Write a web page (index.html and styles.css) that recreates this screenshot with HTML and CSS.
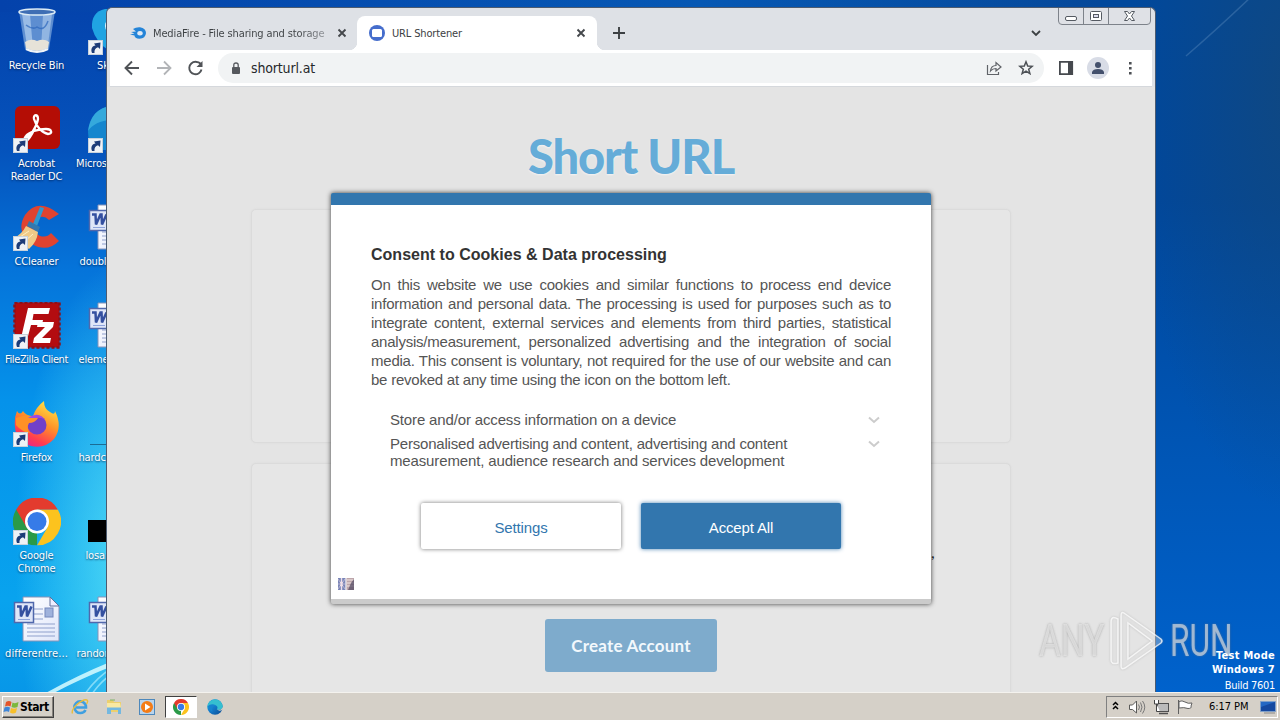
FILE: index.html
```html
<!DOCTYPE html>
<html lang="en">
<head>
<meta charset="utf-8">
<title>Desktop</title>
<link rel="stylesheet" href="styles.css">
</head>
<body>
<svg class="defs" width="0" height="0">
  <defs>
    <linearGradient id="gFox" x1="0.8" y1="0" x2="0.3" y2="1"><stop offset="0" stop-color="#ffe848"/><stop offset=".45" stop-color="#ff9328"/><stop offset=".8" stop-color="#ff3c50"/><stop offset="1" stop-color="#e8268a"/></linearGradient>
    <linearGradient id="gPaper" x1="0" y1="0" x2="1" y2="1"><stop offset="0" stop-color="#fff"/><stop offset="1" stop-color="#dfe6fa"/></linearGradient>
    <linearGradient id="gEdge" x1="0" y1="0" x2="1" y2="1"><stop offset="0" stop-color="#1b9de2"/><stop offset=".5" stop-color="#1478c8"/><stop offset="1" stop-color="#0c4a90"/></linearGradient>
    <symbol id="arrow" viewBox="0 0 15 15"><rect width="15" height="15" fill="#eef2f6"/><rect x=".5" y=".5" width="14" height="14" fill="none" stroke="#c8d2dc"/><path d="M4 13C2.500 9 4 6 7.500 5.500L6 3.500L12.500 2.500L12 9L10 7.300C7.500 8 6 10 6.500 13Z" fill="#1c3c78"/></symbol>
    <symbol id="word" viewBox="0 0 48 48">
      <path d="M10 1H37L46 10V45H10Z" fill="url(#gPaper)" stroke="#8793b8"/><path d="M37 1V10H46Z" fill="#eef" stroke="#62719c"/>
      <path d="M20 13H30M20 18H30M20 23H30M14 28H42M14 32H42M14 36H42M14 40H42" stroke="#8fa0cc"/><rect x="32" y="12" width="8" height="9" fill="#9fb2dc" stroke="#7488bc"/>
      <rect x="1.500" y="6.500" width="19" height="20" fill="#dfe6f8" stroke="#5068ac" stroke-width="1.500"/>
      <path d="M4 10.500H7.500L8 20.500L12.500 10.500H13.500L14 20.500L18.500 10.500" fill="none" stroke="#3450a0" stroke-width="2.500"/><path d="M5 23.500H17" stroke="#8ea4dc"/>
    </symbol>
    <symbol id="chrome" viewBox="0 0 48 48">
      <path d="M24 24L24 48A24 24 0 0 1 3.200 12Z" fill="#2a9a48"/><path d="M24 12H44.800A24 24 0 0 1 24 48L34.400 30Z" fill="#fcc31e"/><path d="M3.200 12L13.600 30L24 24L24 12H44.800A24 24 0 0 0 3.200 12Z" fill="#e33b2e"/>
      <circle cx="24" cy="24" r="12" fill="#fff"/><circle cx="24" cy="24" r="9.500" fill="#367be8"/>
    </symbol>
    <symbol id="edge" viewBox="0 0 48 48">
      <circle cx="24" cy="24" r="23" fill="url(#gEdge)"/><path d="M2 20C6-4 42-6 47 20C49 31 38 35 29 31C34 27 31 19 23 19C13 18 6 24 2 30Z" fill="#35bfd0"/><path d="M30 31C38 35 46 31 47 23L48 30C44 36 35 37 30 31Z" fill="#d5d0c8"/><path d="M2 22C10 12 28 14 29 24C24 16 12 24 17 38Q6 36 2 22Z" fill="#1683cf"/>
    </symbol>
  </defs>
</svg>
<div class="desktop">
  <svg class="wallpaper" viewBox="0 0 1280 692" width="1280" height="692">
    <path d="M44 694Q76 676 110 662L110 667Q78 680 52 694Z" fill="#d8fbff" opacity=".85"/>
    <path d="M85 694Q96 678 112 668M92 694Q101 681 112 674" fill="none" stroke="#bdf3ff" opacity=".6" stroke-width="1.500"/>
    <path d="M1186 56Q1214 32 1252-4" fill="none" stroke="#5d8dbd" opacity=".4" stroke-width="1.500"/>
  </svg>
  <div class="icons">
    <div class="ic"><svg width="48" height="48" viewBox="0 0 48 48"><path d="M6 3L12 41Q24 48 36 41L42 3Z" fill="#8eb6e4" opacity=".65"/><path d="M9 6L14 38L20 41L17 6Z" fill="#d5e9fb" opacity=".5"/><path d="M30 7L28 40L35 37L39 6Z" fill="#c5dcf4" opacity=".5"/><path d="M12 34Q18 30 24 33Q31 30 36 34L35 40Q24 46 13 40Z" fill="#e6e2d8"/><ellipse cx="24" cy="4" rx="18" ry="3" fill="#3f6eb4" stroke="#dcebf5" stroke-width="1.500"/><path d="M13 41Q24 47 35 41" stroke="#f0f4f8" fill="none" stroke-width="2"/><path d="M13 17Q20 22 24 19Q31 24 35 13" stroke="#2c66bc" fill="none" stroke-width="1.500" opacity=".7"/></svg><span class="lb">Recycle Bin</span></div>
    <div class="ic"><svg width="48" height="48" viewBox="0 0 48 48"><path d="M17 1Q3 4 4 20Q8 35 22 43H48V1Z" fill="#20a4e2"/><circle cx="26" cy="18" r="9" fill="#e4f6fd"/><use href="#arrow" x="0" y="32" width="15" height="15"/></svg><span class="lb side" style="--x:22px">Skype</span></div>
    <div class="ic"><svg width="48" height="48" viewBox="0 0 48 48"><rect x="2" y="0" width="45" height="43" rx="6" fill="#b40d05"/><path d="M10 34C17 32 24 20 25 13C25 8 20 8 21 13C23 20 29 27 35 28C40 28 39 23 33 23C25 23 16 26 13 30C9 35 13 37 17 31C20 27 24 18 25 13" fill="none" stroke="#fff" stroke-width="2.300"/><use href="#arrow" x="0" y="32" width="15" height="15"/></svg><span class="lb">Acrobat<br>Reader DC</span></div>
    <div class="ic"><svg width="48" height="48" viewBox="0 0 48 48"><path d="M0 26C1 12 9 2 22 0H48V44H6Q0 36 0 26Z" fill="#1586ce"/><path d="M0 25C2 10 10 1 24 0V14C12 14 4 19 0 25Z" fill="#35a9dc"/><use href="#arrow" x="0" y="32" width="15" height="15"/></svg><span class="lb side" style="--x:1px">Microsoft</span></div>
    <div class="ic"><svg width="48" height="48" viewBox="0 0 48 48"><path d="M46 10L36 16Q29 9 22 17Q18 28 27 32Q34 34 38 29L46 37Q34 49 19 40Q2 28 12 11Q25-7 46 10Z" fill="#df4330"/><path d="M31 4L24 22L20 20L27 3Z" fill="#3098cf"/><path d="M16 17L27 23L25 28L14 22Z" fill="#3478ae"/><path d="M13 22L25 28Q24 38 16 45L1 34Q9 30 13 22Z" fill="#efca87"/><path d="M7 33L16 27M12 37L20 30" stroke="#fff0c5"/><use href="#arrow" x="0" y="32" width="15" height="15"/></svg><span class="lb">CCleaner</span></div>
    <div class="ic"><svg width="48" height="48"><use href="#word" width="48" height="48"/></svg><span class="lb side" style="--x:4.500px">doubled</span></div>
    <div class="ic"><svg width="48" height="48" viewBox="0 0 48 48"><rect x="1.500" y=".5" width="45" height="45" fill="#b30c10" stroke="#8c1018" stroke-width="2.500" stroke-dasharray="3 2"/><path d="M15 6H37L35.500 12H20.500L19.500 18H30L29 23H18L14.500 36H8ZM25 20H41L40 25L29 36H38L37 41H20L21 36L32 25H24Z" fill="#fff"/><use href="#arrow" x="0" y="32" width="15" height="15"/></svg><span class="lb fz">FileZilla Client</span></div>
    <div class="ic"><svg width="48" height="48"><use href="#word" width="48" height="48"/></svg><span class="lb side" style="--x:3.500px">elements</span></div>
    <div class="ic"><svg width="48" height="48" viewBox="0 0 48 48"><path d="M4 11Q7 16 10 11Q13 16 20 16Q23 7 31 1Q31 9 37 12Q42 16 42 11Q50 27 41 39Q32 49 18 46Q3 42 2 27Q1 18 4 11Z" fill="url(#gFox)"/><circle cx="24" cy="25" r="9.500" fill="#7140c8"/><path d="M3 18Q14 13 25 18Q22 23 16 23Q13 28 17 33Q9 32 3 25Z" fill="#ff9126"/><path d="M15 18Q27 10 33 22Q31 17 23 18Z" fill="#a14ae0"/><use href="#arrow" x="0" y="32" width="15" height="15"/></svg><span class="lb">Firefox</span></div>
    <div class="ic"><svg width="48" height="48" viewBox="0 0 48 48"><path d="M2 44.500H48" stroke="#1b6c95"/></svg><span class="lb side" style="--x:3.500px">hardcore</span></div>
    <div class="ic"><svg width="48" height="48" viewBox="0 0 48 48"><use href="#chrome" width="48" height="48" y="-.5"/><use href="#arrow" x="0" y="32" width="15" height="15"/></svg><span class="lb">Google<br>Chrome</span></div>
    <div class="ic"><svg width="48" height="48" viewBox="0 0 48 48"><rect y="22" width="48" height="22" fill="#000"/></svg><span class="lb side" style="--x:10.500px">losangel</span></div>
    <div class="ic"><svg width="48" height="48"><use href="#word" width="48" height="48"/></svg><span class="lb dr">differentre...</span></div>
    <div class="ic"><svg width="48" height="48"><use href="#word" width="48" height="48"/></svg><span class="lb side" style="--x:1.500px">randomly</span></div>
  </div>

  <div class="window">
    <div class="tabbar">
      <div class="tab">
        <svg width="16" height="16" viewBox="0 0 16 16"><path d="M3 4Q6 2 10 2.300Q16 3.500 16 8Q15.500 13.700 9.500 13.700Q4.500 13.500 4.500 10.500L0 9.500L4.500 8.500L1 7L6 6.500Z" fill="#2484d8"/><ellipse cx="10" cy="8.200" rx="2.700" ry="2.200" fill="#dfe9f5"/></svg>
        <span class="tt t1">MediaFire - File sharing and storage</span>
        <svg class="x" width="10" height="10" viewBox="0 0 10 10"><path d="M1.500 1.500L8.500 8.500M8.500 1.500L1.500 8.500" stroke="#45484c" stroke-width="1.900"/></svg>
      </div>
      <div class="tab on">
        <svg width="16" height="16" viewBox="0 0 16 16"><circle cx="8" cy="8" r="8" fill="#456dcc"/><rect x="3" y="4" width="10" height="8" rx="1.500" fill="#fff"/></svg>
        <span class="tt t2">URL Shortener</span>
        <svg class="x" width="10" height="10" viewBox="0 0 10 10"><path d="M1.500 1.500L8.500 8.500M8.500 1.500L1.500 8.500" stroke="#45484c" stroke-width="1.900"/></svg>
      </div>
      <svg class="plus" width="12" height="12" viewBox="0 0 12 12"><path d="M6 0V12M0 6H12" stroke="#3c4043" stroke-width="1.900"/></svg>
      <svg class="chev" width="10" height="7" viewBox="0 0 10 7"><path d="M1 1L5 5L9 1" fill="none" stroke="#3c4043" stroke-width="1.800"/></svg>
      <svg class="caption" width="94" height="18" viewBox="0 0 94 18"><path d="M.5 0V13Q.5 16.500 4 16.500H89Q92.500 16.500 92.500 13V0M25.500 0V16.500M50.500 0V16.500" fill="#dfe1e6" stroke="#7d828a"/><rect x="7.500" y="8.500" width="11" height="4" rx="1.500" fill="#fff" stroke="#555a62"/><rect x="32.500" y="3.500" width="11" height="9" rx="1" fill="#fff" stroke="#555a62"/><rect x="35.500" y="6.500" width="5" height="3" fill="#dde" stroke="#555a62"/><path d="M66.500 3.500H69.500L71.500 6L73.500 3.500H76.500L73.500 8L76.500 12.500H73.500L71.500 10L69.500 12.500H66.500L69.500 8Z" fill="#fff" stroke="#555a62"/></svg>
    </div>
    <div class="toolbar">
      <svg class="nav" width="88" height="16" viewBox="0 0 88 16"><path d="M15 8H2M8 1.500L1.500 8L8 14.500" fill="none" stroke="#505357" stroke-width="1.900"/><path d="M33 8H46M40 1.500L46.500 8L40 14.500" fill="none" stroke="#b2b4b7" stroke-width="1.800"/><path d="M77 4Q75 1.800 71.500 1.800A6.200 6.200 0 1 0 77.500 9.500" fill="none" stroke="#505357" stroke-width="1.900"/><path d="M78.500 1V7H72.500Z" fill="#505357"/></svg>
      <div class="omni">
        <svg width="10" height="13" viewBox="0 0 10 13"><rect x="1" y="5" width="8" height="7" rx="1" fill="#55585d"/><path d="M2.800 5V3Q2.800 1 5 1T7.200 3V5" fill="none" stroke="#55585d" stroke-width="1.300"/></svg>
        <span class="url">shorturl.at</span>
        <svg class="share" width="16" height="16" viewBox="0 0 16 16"><path d="M1.500 5V14.500H12.500V12M4.500 11Q5 5.500 10 5.500V2.500L15 7L10 11V8.500Q6.500 8.500 4.500 11Z" fill="none" stroke="#606368" stroke-width="1.200"/></svg>
        <svg class="star" width="16" height="16" viewBox="0 0 16 16"><path d="M8 1.800L9.700 6L14.200 6.300L10.700 9.200L11.900 13.700L8 11.200L4.100 13.700L5.300 9.200L1.800 6.300L6.300 6Z" fill="none" stroke="#4d5156" stroke-width="1.500"/></svg>
      </div>
      <svg class="right" width="82" height="22" viewBox="0 0 82 22"><path d="M.9 4.900H13.200V17.100H.9Z" fill="none" stroke="#46494e" stroke-width="1.800"/><path d="M9 4H14V18H9Z" fill="#46494e"/><circle cx="39" cy="11" r="11" fill="#d8dce6"/><circle cx="39" cy="8" r="3" fill="#43506c"/><path d="M33 17V15Q34 12 39 12T45 15V17Z" fill="#43506c"/><path d="M70 5h2.600v2.600h-2.600zM70 10h2.600v2.600h-2.600zM70 15h2.600v2.600h-2.600z" fill="#4c4f54"/></svg>
    </div>
    <div class="page">
      <h1>Short URL</h1>
      <div class="card a"></div>
      <div class="card b"><span class="create">Create Account</span></div>
      <span class="comma">,</span>
    </div>
  </div>

  <div class="modal">
    <h2>Consent to Cookies &amp; Data processing</h2>
    <div class="para"><p>On this website we use cookies and similar functions to process end device</p><p>information and personal data. The processing is used for purposes such as to</p><p>integrate content, external services and elements from third parties, statistical</p><p>analysis/measurement, personalized advertising and the integration of social</p><p>media. This consent is voluntary, not required for the use of our website and can</p><p class="last">be revoked at any time using the icon on the bottom left.</p></div>
    <div class="row"><span class="r1">Store and/or access information on a device</span><svg width="12" height="8" viewBox="0 0 12 8"><path d="M1 1.500L6 6L11 1.500" fill="none" stroke="#ccc" stroke-width="2"/></svg></div>
    <div class="row"><span class="r2">Personalised advertising and content, advertising and content<br><span class="r3">measurement, audience research and services development</span></span><svg width="12" height="8" viewBox="0 0 12 8"><path d="M1 1.500L6 6L11 1.500" fill="none" stroke="#ccc" stroke-width="2"/></svg></div>
    <div class="btns"><span class="btn">Settings</span><span class="btn pri">Accept All</span></div>
    <svg class="flags" width="16" height="12" viewBox="0 0 16 12"><rect width="7.500" height="12" fill="#8f98c4"/><path d="M0 1L7 11M7 1L0 11M3.500 0V12M0 6H7" stroke="#f0dfe8"/><path d="M1 0V12M6 0V12" stroke="#5564a4" stroke-width=".7"/><rect x="8.500" width="7.500" height="12" fill="#bda5aa"/><path d="M9 2H16M9 5H16M9 8H16" stroke="#f3e8e6"/><path d="M13 5L16 1V12H10Z" fill="#4e4660" opacity=".7"/></svg>
  </div>

  <div class="mark">
    <span class="any">ANY</span>
    <svg width="58" height="64" viewBox="0 0 58 64"><path d="M17 4L54 30Q56 32 54 34L18 59Q14 61 14 57V7Q14 2 17 4ZM21 14V50L45 32Z" fill="#fff" fill-opacity=".28" stroke="#fff" stroke-opacity=".75" stroke-width="1.500"/><path d="M11 10Q4 6 4 13V51Q4 56 11 54Z" fill="#fff" fill-opacity=".28" stroke="#fff" stroke-opacity=".75" stroke-width="1.500"/></svg>
    <span class="run">RUN</span>
  </div>
  <div class="mode"><b>Test Mode</b><b>Windows 7</b><span>Build 7601</span></div>
</div>

<div class="taskbar">
  <div class="start"><svg width="17" height="16" viewBox="0 0 17 16"><path d="M3 3Q6 1 8.500 3L7.500 7.500Q5 6 2 7.500Z" fill="#e5552b"/><path d="M9.500 3.500Q12 5 15.500 3L14.500 8Q11.500 9.500 8.500 8Z" fill="#7cb83c"/><path d="M1.500 8.500Q4 7 7 8.500L6 13Q4 11.500.5 13Z" fill="#3f86d8"/><path d="M8 9Q11 10.500 14 9L13 13.500Q10 15.500 7 13.500Z" fill="#f7bf2a"/></svg><b>Start</b></div>
  <div class="quick">
    <span class="q"><svg width="18" height="18" viewBox="0 0 18 18"><path d="M14.500 12Q13 15 9.500 15A5.800 5.800 0 1 1 15 9.500H5" fill="none" stroke="#3f9fe0" stroke-width="2.600"/><path d="M1.500 15.500Q0 12 6 6.500Q13 .5 16 2Q17.500 3 15.500 6" fill="none" stroke="#e8bd3c" stroke-width="1.400"/></svg></span>
    <span class="q"><svg width="18" height="18" viewBox="0 0 18 18"><path d="M2 2H8L9 4H16V14H2Z" fill="#ecd06e"/><path d="M2 5H15L16 10H2Z" fill="#fae9a2"/><path d="M2 9.500H16V16H13V12H6V16H2Z" fill="#74b8e0"/><path d="M5 2H10" stroke="#7fb46b"/></svg></span>
    <span class="q"><svg width="18" height="18" viewBox="0 0 18 18"><rect x="1.500" y="1.500" width="15" height="15" fill="#b9d4ec" stroke="#4e88bb"/><circle cx="9" cy="9" r="6" fill="#f47c16"/><path d="M7 5.500L12.500 9L7 12.500Z" fill="#fff"/></svg></span>
    <span class="q act"><svg width="16" height="16"><use href="#chrome" width="16" height="16"/></svg></span>
    <span class="q"><svg width="16" height="16"><use href="#edge" width="16" height="16"/></svg></span>
  </div>
  <div class="tray">
    <svg width="84" height="18" viewBox="0 0 84 18"><path d="M2 7L4.500 4.500L7 7M2 11L4.500 8.500L7 11" fill="none" stroke="#000" stroke-width="1.500"/><path d="M18.500 7H21.500L25.500 3V15L21.500 11.500H18.500Z" fill="#fff" stroke="#5a5a58"/><path d="M27.500 6.500Q29.500 9 27.500 12M29.500 4.500Q32.500 9 29.500 14M31.500 3Q36 9 31.500 15.500" fill="none" stroke="#777" stroke-width="1"/><rect x="46.500" y="5.500" width="11" height="8" fill="#bbb" stroke="#505050"/><path d="M48 15.500H57" stroke="#505050" stroke-width="1.500"/><path d="M43.500 2V6H47.500V2M45.500 6V13.500H49" fill="#fff" stroke="#444"/><path d="M67.500 2V16M68 3.500Q71 2 74 4T81 5L80 8Q81 10.500 77 10.500Q73 9 68 10Z" fill="#fff" stroke="#606060"/></svg>
    <span class="clock">6:17 PM</span>
    <svg width="16" height="14" viewBox="0 0 16 14"><path d="M.5 1.500H15.500V11.500H.5Z" fill="#2468c4" stroke="#7f9fc8"/><path d="M1 7L15 2V11H1Z" fill="#1549a0"/><path d="M4 13H15" stroke="#888"/></svg>
  </div>
</div>
</body>
</html>
```

FILE: styles.css
```css
* { box-sizing: border-box; }
body { margin: 0; width: 1280px; height: 720px; overflow: hidden; display: flex; flex-direction: column; font-family: "DejaVu Sans Condensed", "DejaVu Sans", sans-serif; font-size: 11px; }
.defs { position: absolute; }
svg { flex: none; display: block; }
h1, h2, p { margin: 0; }

.desktop { position: relative; height: 692px; overflow: hidden;
  background:
    radial-gradient(ellipse 110px 300px at 125px 560px, rgba(100,235,248,.75), rgba(80,225,250,0)) 0 0 / 108px 692px no-repeat,
    radial-gradient(ellipse 160px 420px at 1290px 90px, rgba(20,72,122,.75), rgba(10,72,136,0)) no-repeat,
    linear-gradient(180deg, #00489c 0, #00479c 200px, #0056b6 460px, #0062cc 692px) 1100px 0 / 180px 692px no-repeat,
    linear-gradient(90deg, #0442ab, #0658b4 700px, #05489a 1100px) 0 0 / 100% 12px no-repeat,
    linear-gradient(180deg, #0442ab 0, #0553bc 150px, #0574da 270px, #0592ea 400px, #08a3ee 600px, #0797e8 692px); }
.wallpaper { position: absolute; inset: 0; }

.icons { position: relative; width: 150px; padding-top: 8px; display: grid; grid-template-columns: 75px 75px; grid-auto-rows: 98px; }
.ic { display: flex; flex-direction: column; align-items: center; }
.ic svg { margin-left: -1px; }
.lb { margin-top: 3px; color: #fff; font-size: 11px; line-height: 13px; letter-spacing: -.15px; text-align: center; white-space: nowrap; text-shadow: 0 1px 2px rgba(0,20,60,.7); margin-left: -2px; }
.fz { letter-spacing: -.4px; }
.dr { letter-spacing: .1px; }
.side { align-self: flex-start; margin-left: var(--x); }

.window { position: absolute; left: 106px; top: 7px; width: 1050px; height: 685px; border: 1px solid #4c5b70; border-bottom: 0; border-radius: 6px 6px 0 0; background: #dee1e6; display: flex; flex-direction: column; padding: 0 2px; overflow: hidden; }
.tabbar { height: 42px; display: flex; align-items: flex-start; position: relative; padding-left: 10px; }
.tab { display: flex; align-items: center; height: 34px; margin-top: 8px; width: 238px; padding: 0 10px 0 11px; color: #3c4043; }
.tab.on { background: #fff; border-radius: 8px 8px 0 0; width: 240px; padding-left: 12px; padding-right: 11px; position: relative; }
.tab.on::before, .tab.on::after { content: ""; position: absolute; bottom: 0; width: 8px; height: 8px; }
.tab.on::before { left: -8px; background: radial-gradient(circle at 0 0, transparent 8px, #fff 8.500px); }
.tab.on::after { right: -8px; background: radial-gradient(circle at 100% 0, transparent 8px, #fff 8.500px); }
.tt { margin-left: 7px; white-space: nowrap; }
.t1 { width: 176px; overflow: hidden; letter-spacing: -.13px; background: linear-gradient(90deg, #3c4043 145px, #9a9da2 174px); background-clip: text; color: transparent; }
.t2 { letter-spacing: -.15px; }
.x { margin-left: auto; }
.plus { margin: 19px 0 0 16px; }
.chev { margin: 22px 0 0 406px; }
.caption { margin-left: 17px; }
.toolbar { height: 37px; background: #fff; display: flex; align-items: center; padding-left: 14px; border-bottom: 1px solid #d5d8dc; margin: 0 1px; }
.omni { width: 826px; height: 30px; margin-left: 6px; border-radius: 15px; background: #f1f3f4; display: flex; align-items: center; padding: 0 10px 0 13px; }
.url { margin-left: 10px; font-size: 14px; color: #26282b; letter-spacing: -.15px; }
.share { margin-left: auto; }
.star { margin-left: 16px; }
.right { margin-left: 15px; }
.page { flex: 1; margin: 0 -2px; background: #e4e4e4; position: relative; padding: 0 144px; overflow: hidden; }
h1 { padding-top: 38px; height: 122px; font: 900 47px/62px Lato, sans-serif; color: #65acd8; text-align: center; letter-spacing: -1.100px; text-shadow: 0 1px 2px rgba(255,255,255,.6); }
.card { border: 1px solid #dbdbdb; border-radius: 5px; background: #e6e6e6; box-shadow: 0 0 2px #dadada; }
.a { height: 234px; }
.b { height: 250px; margin-top: 20px; display: flex; justify-content: center; align-items: flex-start; padding-top: 155px; }
.create { width: 172px; height: 53px; border-radius: 3px; background: #7eabcc; color: #f2f8fc; font: 700 17px/54px Lato, sans-serif; letter-spacing: .2px; text-align: center; }
.comma { position: absolute; left: 824px; top: 457px; font: 16px/16px Lato, sans-serif; color: #222; }

.modal { position: absolute; left: 331px; top: 193px; width: 600px; height: 411px; background: #fff; border-top: 12px solid #3276ae; border-bottom: 5px solid #cbcbcb; border-radius: 2px; box-shadow: 0 0 5px rgba(0,0,0,.75); padding: 39px 40px 0; font-family: "Liberation Sans", Arial, sans-serif; font-size: 15px; color: #555; }
h2 { font-size: 16px; line-height: 22px; color: #333; white-space: nowrap; letter-spacing: .02px; }
.para { margin-top: 9px; width: 520px; line-height: 19px; letter-spacing: -.23px; }
.para p { text-align-last: justify; white-space: nowrap; }
.para .last { text-align-last: left; }
.row { display: flex; justify-content: space-between; padding: 0 11px 0 19px; line-height: 17px; margin-top: 7px; white-space: nowrap; }
.r1 { letter-spacing: -.15px; }
.r2 { letter-spacing: -.2px; }
.r3 { letter-spacing: -.14px; }
.para + .row { margin-top: 22px; }
.row svg { margin-top: 5px; }
.btns { display: flex; gap: 20px; margin: 34px 0 0 50px; }
.btn { width: 200px; height: 46px; border-radius: 2px; text-align: center; line-height: 49px; letter-spacing: -.15px; color: #3276ae; box-shadow: 0 0 4px rgba(0,0,0,.55); }
.pri { background: #3276ae; color: #fff; box-shadow: 0 0 4px rgba(30,100,160,.8); }
.flags { margin: 29px 0 0 -33px; }

.mode { position: absolute; right: 5px; top: 649px; display: flex; flex-direction: column; align-items: flex-end; color: #fff; line-height: 14px; }
.mode b { letter-spacing: .28px; }
.mode span { margin-top: 2px; letter-spacing: -.3px; }
.mark { position: absolute; left: 1039px; top: 609px; display: flex; align-items: center; height: 64px; font: 44px/64px Roboto, sans-serif; color: rgba(255,255,255,.5); text-shadow: 0 0 2px rgba(140,140,140,.4); filter: drop-shadow(0 0 1px rgba(120,120,120,.45)); }
.any { width: 68px; transform: scaleX(.76); transform-origin: left; white-space: nowrap; }
.run { margin-left: 5px; transform: scaleX(.72); transform-origin: left; }

.taskbar { height: 28px; background: #d5d0c8; border-top: 1px solid #f4f2ee; display: flex; align-items: center; padding: 0 2px; }
.start { width: 52px; height: 22px; display: flex; align-items: center; border: 1px solid; border-color: #fff #404040 #404040 #fff; box-shadow: inset -1px -1px #86827c; margin-top: 1px; }
.start b { font-size: 12px; letter-spacing: -.4px; }
.quick { display: flex; margin-left: 10px; }
.q { width: 32px; height: 22px; display: flex; align-items: center; justify-content: center; margin-right: 1.700px; }
.act { background: #fff; border: 1px solid; border-color: #404040 #fff #fff #404040; }
.tray { margin-left: auto; width: 172px; height: 22px; border: 1px solid; border-color: #808080 #fff #fff #808080; display: flex; align-items: center; padding-left: 4px; }
.clock { margin: 0 10px 0 14px; white-space: nowrap; color: #000; width: 41px; letter-spacing: -.05px; }
```
